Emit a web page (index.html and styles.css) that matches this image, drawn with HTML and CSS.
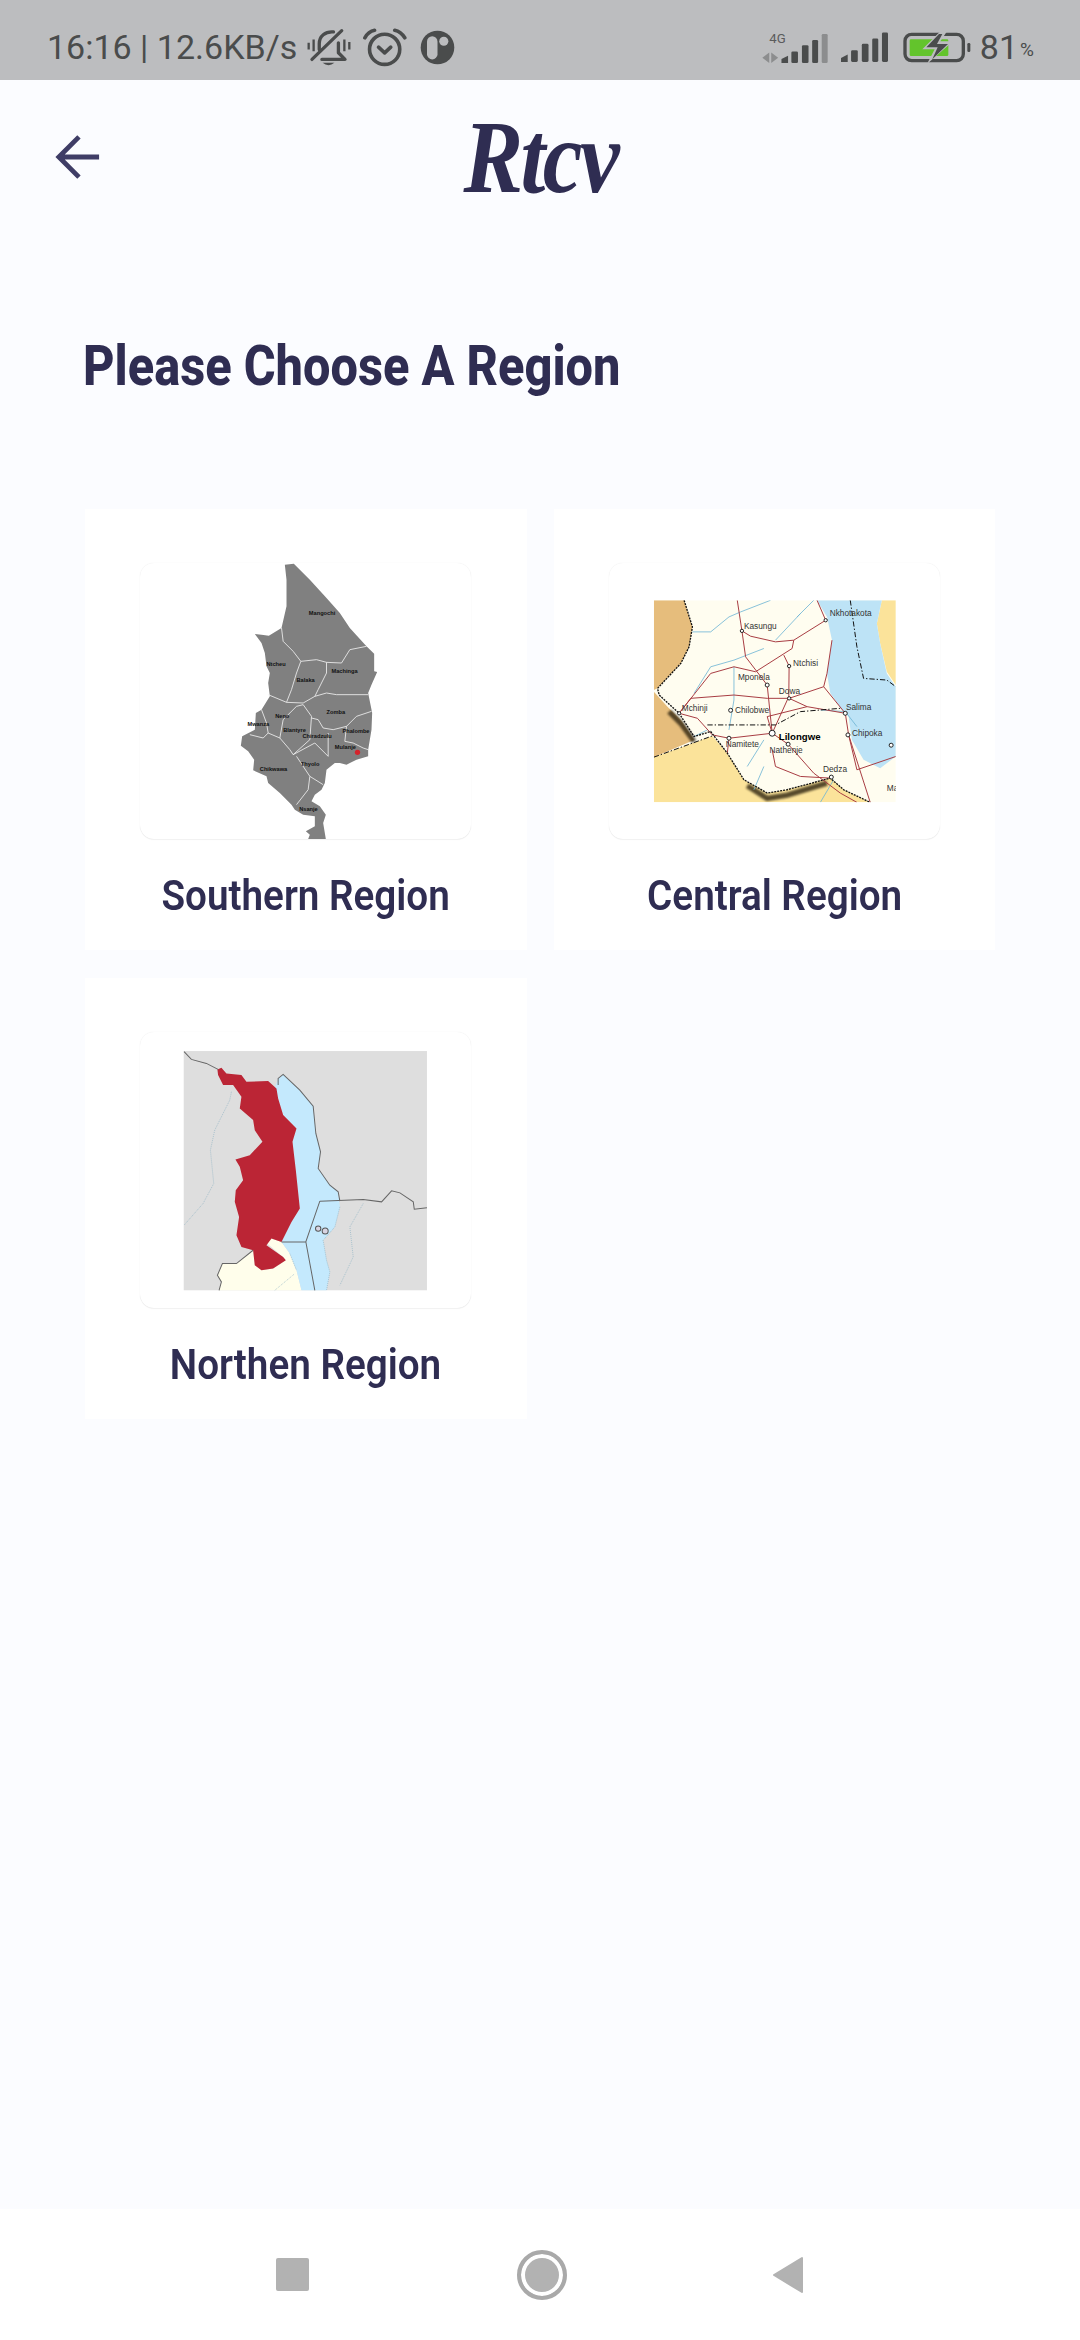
FILE: index.html
```html
<!DOCTYPE html>
<html lang="en">
<head>
    <meta charset="UTF-8">
    <meta name="viewport" content="width=device-width, initial-scale=1.0">
    <title>Rtcv - Choose A Region</title>
    <link rel="stylesheet" href="styles.css">
</head>
<body>
    <div class="status-bar">
        <div class="status-left">
            <span class="status-text">16:16 | 12.6KB/s</span>
            <svg class="icon-mute" viewBox="40 30 140 115">
                <path class="ico" d="M82 95V78C82 55 100 40 125 42"/>
                <path class="ico" d="M140 75V105L160 125H90"/>
                <path class="ico" d="M60 125L150 38"/>
                <path class="ico-fill" d="M92 135H128Q110 150 92 135Z"/>
                <path class="ico-thin" d="M50 75V95M65 65V100M158 65V100M173 72V95"/>
            </svg>
            <svg class="icon-alarm" viewBox="220 28 122 114">
                <circle class="ico" cx="280" cy="90" r="42"/>
                <path class="ico" d="M225 58Q235 40 252 37M308 37Q325 40 336 58"/>
                <path class="ico" d="M263 84L280 100L297 84"/>
            </svg>
            <svg class="icon-app" viewBox="385 36 100 100">
                <circle class="ico-fill" cx="435" cy="86" r="48"/>
                <rect class="ico-cut" x="405" y="54" width="30" height="66" rx="15"/>
                <circle class="ico-cut" cx="453" cy="68" r="13"/>
            </svg>
        </div>
        <div class="status-right">
            <svg class="icon-sig-4g" viewBox="187 95 198 100">
                <text class="sig-label" x="208" y="132">4G</text>
                <path class="ico-dim" d="M208 160V192L187 176ZM214 160V192L235 176Z"/>
                <path class="bar" d="M245 180L265 170V192H245Z"/>
                <rect class="bar" x="275" y="157" width="20" height="35" rx="4"/>
                <rect class="bar" x="307" y="138" width="20" height="54" rx="4"/>
                <rect class="bar" x="338" y="122" width="18" height="70" rx="4"/>
                <rect class="bar-dim" x="367" y="104" width="18" height="88" rx="4"/>
            </svg>
            <svg class="icon-sig" viewBox="425 100 140 95">
                <path class="bar" d="M425 180L445 170V192H425Z"/>
                <rect class="bar" x="455" y="157" width="20" height="35" rx="4"/>
                <rect class="bar" x="487" y="138" width="20" height="54" rx="4"/>
                <rect class="bar" x="518" y="122" width="18" height="70" rx="4"/>
                <rect class="bar" x="547" y="104" width="18" height="88" rx="4"/>
            </svg>
            <svg class="icon-battery" viewBox="610 100 204 93">
                <rect class="batt-body" x="616" y="107" width="175" height="79" rx="20"/>
                <rect class="bar" x="803" y="133" width="9" height="27" rx="4"/>
                <rect class="batt-level" x="630" y="122" width="116" height="50" rx="4"/>
                <path class="batt-gap" d="M722 98L668 152H705L682 196L760 128H722L742 98Z"/>
                <path class="ico-fill" d="M718 106L680 146H714L698 182L745 136H712L728 106Z"/>
            </svg>
            <span class="batt-num">81</span><span class="batt-pct">%</span>
        </div>
    </div>

    <header class="app-header">
        <a class="back-btn" href="#">
            <svg class="back-icon" viewBox="0 0 48 48">
                <path d="M46 24H4M25 3L4 24L25 45"/>
            </svg>
        </a>
        <div class="logo">Rtcv</div>
        <div></div>
    </header>

    <main class="content">
        <h1 class="page-title">Please Choose A Region</h1>

        <div class="region-grid">
            <a class="region-card" href="#">
                <div class="region-thumb">
                    <svg class="map" viewBox="211 190 992 828">
                        <path class="south-land" d="M645 195L672 192L720 240L770 295L810 340L840 385L890 440L913 462V515L922 517L905 555L895 580L903 620L907 640L905 690L895 750V770L860 780L830 795L810 790H795L770 810L765 850L755 870L735 885L725 905L750 920L768 945L760 970L768 1018H715L720 1005L708 995L735 980V950L700 945L675 930L665 915L630 880L595 850L590 830L550 812L553 780L535 755L513 738L517 710L555 690L558 640L575 630L600 590L595 550L600 520L590 500L585 460L575 430L555 403L575 405L597 408L635 385L650 320V240Z"/>
                        <path class="south-line" d="M635 385L640 425L670 455L693 485L680 520L665 570L650 608"/>
                        <path class="south-line" d="M693 485L740 480L770 488L815 490L840 450L890 440"/>
                        <path class="south-line" d="M770 488V520L745 570L735 590L700 610L650 608L595 585"/>
                        <path class="south-line" d="M735 590L770 580L800 585H895"/>
                        <path class="south-line" d="M700 615L725 650L720 720L670 765L660 750L630 715L640 660L680 620Z"/>
                        <path class="south-line" d="M575 630L590 670L595 700L630 715M540 705L580 715L595 700"/>
                        <path class="south-line" d="M725 655L745 660L760 685L790 690L830 680L860 650L905 635"/>
                        <path class="south-line" d="M830 680L825 725L850 730L880 745L895 750"/>
                        <path class="south-line" d="M775 700V770L735 730L670 765M680 770L720 830L760 855M720 830L715 870L680 915"/>
                        <circle class="south-pin" cx="863" cy="758" r="8"/>
                        <g class="south-labels">
                            <text x="717" y="345">Mangochi</text>
                            <text x="590" y="500">Ntcheu</text>
                            <text x="785" y="521">Machinga</text>
                            <text x="680" y="548">Balaka</text>
                            <text x="770" y="642">Zomba</text>
                            <text x="616" y="654">Neno</text>
                            <text x="533" y="680">Mwanza</text>
                            <text x="640" y="696">Blantyre</text>
                            <text x="818" y="699">Phalombe</text>
                            <text x="698" y="715">Chiradzulu</text>
                            <text x="795" y="749">Mulanje</text>
                            <text x="693" y="798">Thyolo</text>
                            <text x="570" y="814">Chikwawa</text>
                            <text x="688" y="933">Nsanje</text>
                        </g>
                    </svg>
                </div>
                <span class="region-name">Southern Region</span>
            </a>

            <a class="region-card" href="#">
                <div class="region-thumb">
                    <svg class="map" viewBox="24 9 996 828">
                        <defs>
                            <clipPath id="central-clip"><rect x="159" y="120" width="728" height="608"/></clipPath>
                        </defs>
                        <g clip-path="url(#central-clip)">
                            <rect class="central-base" x="159" y="120" width="728" height="608"/>
                            <path class="central-tan" d="M159 120H250L275 200L265 260L240 310L170 385L159 390ZM159 395L200 440L240 480L280 540L159 592Z"/>
                            <path class="central-sand" d="M159 592L335 528L380 580L430 660L500 700L560 690L690 655L730 690L810 728H159ZM845 120H887V375L860 335L840 250L830 190Z"/>
                            <path class="central-lake" d="M650 120H845L830 190L840 250L860 340L887 380V590L840 625L790 600L755 540L745 470L725 450L690 400L680 340L695 240L680 170Z"/>
                            <path class="central-shadow" d="M440 678L500 716L560 706L680 670M205 455L240 490L280 545"/>
                            <path class="central-river" d="M275 215L330 215L385 170L420 155L510 120M280 400L330 320L400 300L490 265M590 170L640 120M525 240L600 160M400 320V420L385 510M280 530L320 510M440 620L490 540M460 690L490 620M660 450L735 455L770 500M660 728L700 660"/>
                            <path class="central-road" d="M424 212L410 120M424 212L450 228L525 245L580 240L676 180L650 120M424 212L435 290L500 375L515 520M580 240L575 265L465 335L400 320L330 340L235 460M550 285L566 318L565 410L515 520M235 460L270 415L400 405L500 415L566 415L670 380M566 415L620 440L735 460M670 380L680 340L695 240M670 380L735 460L745 525L810 728M235 460L290 475L335 525L385 535L515 520M515 520L563 553L640 640L720 700L770 728M515 520L500 470L620 440M515 570L525 620L600 650L690 655M745 525L770 630L887 590M385 535L380 580"/>
                            <path class="central-border" d="M250 120L275 200L265 260L240 310L170 385L175 405L235 460L280 530L330 515L380 580L430 660L500 700L560 690L690 655L730 690L810 728"/>
                            <path class="central-dash" d="M159 592L335 528M750 120L770 260L790 355L860 360L887 380M320 495H525L600 455L720 445"/>
                            <g class="central-towns">
                                <circle cx="424" cy="212" r="5"/><circle cx="676" cy="180" r="5"/>
                                <circle cx="566" cy="318" r="5"/><circle cx="500" cy="375" r="6"/>
                                <circle cx="566" cy="415" r="5"/><circle cx="735" cy="460" r="6"/>
                                <circle cx="235" cy="460" r="5"/><circle cx="390" cy="451" r="6"/>
                                <circle cx="515" cy="520" r="9"/><circle cx="743" cy="525" r="6"/>
                                <circle cx="385" cy="535" r="6"/><circle cx="563" cy="553" r="6"/>
                                <circle cx="693" cy="652" r="6"/><circle cx="873" cy="556" r="6"/>
                            </g>
                            <g class="central-labels">
                                <text x="430" y="205">Kasungu</text>
                                <text x="688" y="167">Nkhotakota</text>
                                <text x="578" y="319">Ntchisi</text>
                                <text x="412" y="360">Mponela</text>
                                <text x="535" y="403">Dowa</text>
                                <text x="737" y="449">Salima</text>
                                <text x="243" y="452">Mchinji</text>
                                <text x="403" y="459">Chilobwe</text>
                                <text class="central-capital" x="535" y="539">Lilongwe</text>
                                <text x="755" y="527">Chipoka</text>
                                <text x="375" y="562">Namitete</text>
                                <text x="507" y="578">Nathenje</text>
                                <text x="668" y="638">Dedza</text>
                                <text x="860" y="695">Ma</text>
                            </g>
                        </g>
                    </svg>
                </div>
                <span class="region-name">Central Region</span>
            </a>

            <a class="region-card" href="#">
                <div class="region-thumb">
                    <svg class="map" viewBox="211 187 992 825">
                        <rect class="north-base" x="342" y="243" width="729" height="717"/>
                        <path class="north-cream" d="M590 818L605 805L635 815L660 850L680 900L695 960H448L455 935L443 915L458 880L500 880L550 840L555 885L575 900L610 895L648 870L640 860Z"/>
                        <path class="north-lake" d="M625 325L640 313L690 360L730 408L738 490L752 545L745 595L780 645L805 665L810 710L795 770L760 810L770 870L780 905L770 960H695L680 900L660 850L635 815L665 755L690 715L678 600L668 515L680 475L640 435L625 385L615 355Z"/>
                        <path class="north-red" d="M443 298L455 293L470 310L515 315L530 335L595 333L620 355L625 385L640 435L680 475L668 515L678 600L690 715L665 755L635 815L605 805L590 825L640 860L648 870L610 895L575 900L555 885L550 840L515 830L500 795L508 740L495 695L498 660L520 630L510 590L497 568L540 555L578 515L555 480L550 450L510 415L515 380L490 345H460L445 315Z"/>
                        <path class="north-line" d="M343 245L365 268L410 280L445 298M625 345V325L640 313L690 360L730 408L738 490L752 545L745 595L780 645L805 665L810 693M750 693L880 688L935 695L965 662L990 668L1030 695L1033 717L1071 713M750 693L708 815L735 960M635 815H708M448 960L455 935L443 915L458 880L500 880L550 840"/>
                        <path class="north-river" d="M485 365L480 390L435 480L422 540L432 640L400 700L343 765M880 700L840 770L850 860L810 945M810 710L795 770L760 810L770 870L780 905L770 960M660 850L680 900M615 960L675 910"/>
                        <circle class="north-isle" cx="745" cy="775" r="8"/>
                        <circle class="north-isle" cx="766" cy="782" r="9"/>
                    </svg>
                </div>
                <span class="region-name">Northen Region</span>
            </a>
        </div>
    </main>

    <nav class="nav-bar">
        <span class="nav-square"></span>
        <span class="nav-home"></span>
        <svg class="nav-back" viewBox="0 0 32 38">
            <path d="M30 2V36L2 19Z"/>
        </svg>
    </nav>
</body>
</html>
```

FILE: styles.css
```css
* {
    box-sizing: border-box;
}
body {
    margin: 0;
    width: 1080px;
    height: 2340px;
    overflow: hidden;
    display: flex;
    flex-direction: column;
    font-family: Roboto, Arial, sans-serif;
    background-color: #fbfcff;
    color: #2f2d52;
}
a {
    color: inherit;
    text-decoration: none;
}

/* status bar */
.status-bar {
    height: 80px;
    flex-shrink: 0;
    padding: 10px 46px 0 47px;
    display: flex;
    justify-content: space-between;
    align-items: center;
    background-color: #bcbdbf;
    color: #4a4c4c;
}
.status-left, .status-right {
    display: flex;
    align-items: center;
    padding-top: 4px;
}
.status-text {
    font-size: 34px;
    line-height: 40px;
}
.icon-mute {
    width: 47px;
    height: 38px;
    margin-left: 8px;
}
.icon-alarm {
    width: 44px;
    height: 41px;
    margin-left: 11px;
}
.icon-app {
    width: 35px;
    height: 35px;
    margin-left: 13px;
}
.icon-sig-4g {
    width: 66px;
    height: 33px;
}
.icon-sig {
    width: 47px;
    height: 32px;
    margin-left: 13px;
}
.icon-battery {
    width: 68px;
    height: 31px;
    margin-left: 15px;
}
.batt-num {
    font-size: 34px;
    line-height: 40px;
    margin-left: 9px;
}
.batt-pct {
    font-size: 19px;
    line-height: 40px;
    margin-left: 2px;
    padding-top: 6px;
}
.ico {
    fill: none;
    stroke: #4a4c4c;
    stroke-width: 10;
    stroke-linecap: round;
    stroke-linejoin: round;
}
.ico-thin {
    fill: none;
    stroke: #4a4c4c;
    stroke-width: 7;
}
.ico-fill, .bar {
    fill: #4a4c4c;
}
.ico-cut {
    fill: #bcbdbf;
}
.ico-dim, .bar-dim {
    fill: #8c8d8e;
}
.sig-label {
    font-size: 40px;
    fill: #5a5b5c;
}
.batt-body {
    fill: none;
    stroke: #4a4c4c;
    stroke-width: 10;
}
.batt-level {
    fill: #63c42c;
}
.batt-gap {
    fill: #bcbdbf;
}

/* header */
.app-header {
    height: 154px;
    flex-shrink: 0;
    padding-left: 55px;
    display: grid;
    grid-template-columns: 1fr auto 1fr;
    align-items: center;
}
.back-btn {
    display: flex;
}
.back-icon {
    width: 46px;
    height: 46px;
}
.back-icon path {
    fill: none;
    stroke: #3f3d66;
    stroke-width: 5;
}
.logo {
    font-family: "Liberation Serif", serif;
    font-size: 104px;
    font-weight: bold;
    font-style: italic;
    line-height: 100px;
    letter-spacing: -3px;
    color: #2f2d52;
    margin-right: 55px;
    transform: scaleX(0.86);
}

/* content */
.content {
    flex: 1;
    padding: 0 85px;
}
.page-title {
    margin: 96px 0 0 -2px;
    height: 179px;
    font-size: 56px;
    line-height: 72px;
    font-weight: 800;
    white-space: nowrap;
    transform: scaleX(0.87);
    transform-origin: left top;
}
.region-grid {
    display: grid;
    grid-template-columns: 1fr 1fr;
    gap: 28px 27px;
}
.region-card {
    height: 441px;
    padding-top: 54px;
    display: flex;
    flex-direction: column;
    align-items: center;
    background-color: #fff;
}
.region-thumb {
    width: 331px;
    height: 276px;
    border-radius: 14px;
    overflow: hidden;
    background-color: #fff;
    box-shadow: 0 0 1px rgba(0, 0, 0, 0.1), 0 1px 1px rgba(0, 0, 0, 0.05);
}
.map {
    display: block;
    width: 100%;
    height: 100%;
}
.region-name {
    margin-top: 32px;
    font-size: 42px;
    line-height: 50px;
    font-weight: 600;
    white-space: nowrap;
    transform: scaleX(0.92);
}

/* southern map */
.south-land {
    fill: #808080;
}
.south-line {
    fill: none;
    stroke: #f0f0f0;
    stroke-width: 2.5;
}
.south-pin {
    fill: #d4242c;
}
.south-labels text {
    font-family: "Liberation Sans", sans-serif;
    font-size: 17px;
    font-weight: bold;
    fill: #111;
}

/* central map */
.central-base {
    fill: #fffdf0;
}
.central-tan {
    fill: #e6bd7c;
}
.central-sand {
    fill: #fbe39a;
}
.central-lake {
    fill: #bde3f6;
}
.central-shadow {
    fill: none;
    stroke: #2e2410;
    stroke-width: 16;
    opacity: 0.8;
    filter: blur(3px);
}
.central-river {
    fill: none;
    stroke: #6fb5d5;
    stroke-width: 2.5;
}
.central-road {
    fill: none;
    stroke: #a83c42;
    stroke-width: 3;
}
.central-border {
    fill: none;
    stroke: #111;
    stroke-width: 4;
    stroke-dasharray: 6 3;
}
.central-dash {
    fill: none;
    stroke: #111;
    stroke-width: 3;
    stroke-dasharray: 16 6 4 6;
}
.central-towns circle {
    fill: #fff;
    stroke: #222;
    stroke-width: 3;
}
.central-labels text {
    font-family: "Liberation Sans", sans-serif;
    font-size: 25px;
    fill: #333;
}
.central-labels .central-capital {
    font-size: 29px;
    font-weight: bold;
    fill: #000;
}

/* northern map */
.north-base {
    fill: #dedede;
}
.north-cream {
    fill: #fffeeb;
}
.north-lake {
    fill: #c4e9fd;
}
.north-red {
    fill: #bb2535;
}
.north-line {
    fill: none;
    stroke: #666;
    stroke-width: 3;
}
.north-river {
    fill: none;
    stroke: #8fb4c4;
    stroke-width: 2;
    stroke-dasharray: 3 3;
}
.north-isle {
    fill: #d8d4e2;
    stroke: #555;
    stroke-width: 3;
}

/* bottom nav */
.nav-bar {
    height: 131px;
    flex-shrink: 0;
    display: flex;
    align-items: center;
    justify-content: center;
    background-color: #fff;
}
.nav-square {
    width: 33px;
    height: 33px;
    border-radius: 2px;
    background-color: #b2b2b2;
}
.nav-home {
    width: 50px;
    height: 50px;
    margin: 0 205px 0 208px;
    border: 4px solid #a9a9a9;
    border-radius: 50%;
    background-color: #b2b2b2;
    box-shadow: inset 0 0 0 4px #fff;
}
.nav-back {
    width: 32px;
    height: 38px;
}
.nav-back path {
    fill: #b2b2b2;
    stroke: #b2b2b2;
    stroke-width: 2;
    stroke-linejoin: round;
}
```
